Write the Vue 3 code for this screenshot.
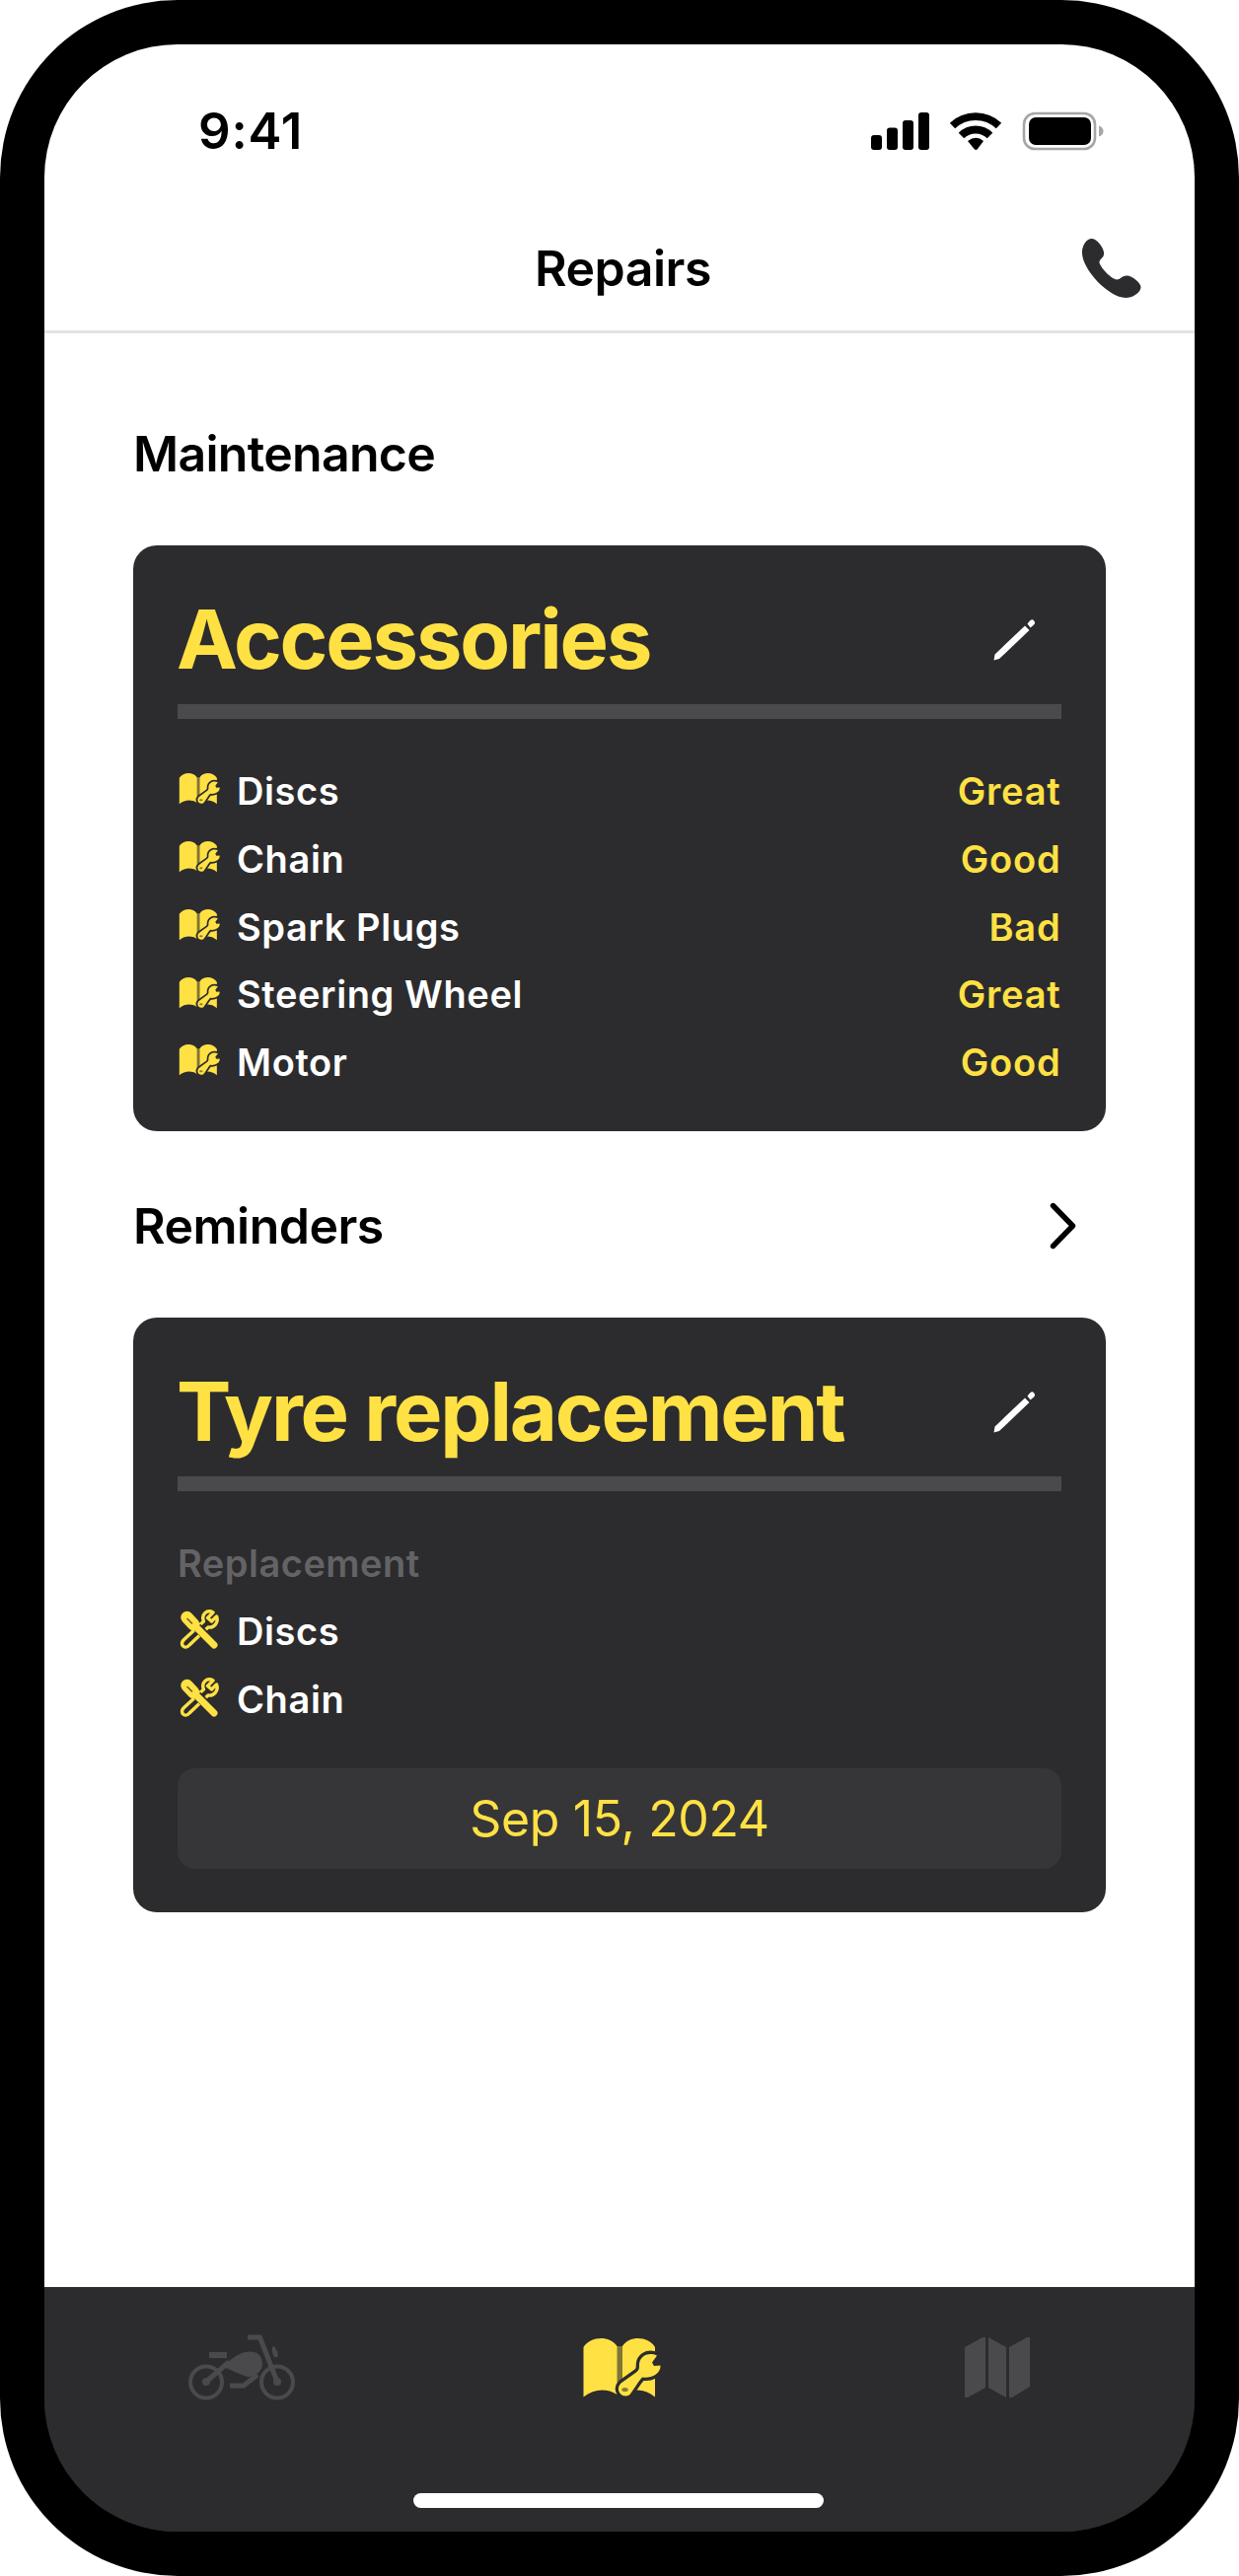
<script setup>
const accessories = [
  { name: 'Discs', state: 'Great' },
  { name: 'Chain', state: 'Good' },
  { name: 'Spark Plugs', state: 'Bad' },
  { name: 'Steering Wheel', state: 'Great' },
  { name: 'Motor', state: 'Good' },
]
const replacements = ['Discs', 'Chain']
</script>

<template>
  <div class="phone">
    <svg class="defs" width="0" height="0" aria-hidden="true">
      <symbol id="manual" viewBox="0 0 80 60">
        <path fill="#ffe144" opacity=".4" d="M34 8h8v48h-8z" />
        <path fill="#ffe144" d="M1.500 9C9-2.500 28-3 35.500 8V57C25 50.500 12 51 1.500 59.500ZM41 8C48-3 67-2.500 74 9V59.500C64 51 52 50.500 41 57Z" />
        <path fill="#ffe144" stroke="#2c2c2e" stroke-width="6.500" stroke-linejoin="round" paint-order="stroke" d="M76 17.500C66 13 57 19 58 29C58 31 57 33 55 34.500L39.500 45.500C33 52 40 61.500 48 57.500C52 53 56 45 61 39.500C69 41 80 37 79.500 27.500L73 28L71 24.500Z" />
        <ellipse cx="43.500" cy="52" rx="3.300" ry="2" fill="#8a7a36" />
      </symbol>
      <symbol id="tools" viewBox="0 0 40 40">
        <g fill="none" stroke="#ffe144" stroke-linecap="round">
          <path stroke-width="3.400" d="M34 3C28-.5 21.500 5 24.500 12L4 31C-.5 36 6 41 10 36L29 18C35 19 40 13 37.500 7L32.500 12L28.500 8.500Z" stroke-linejoin="round" />
          <path stroke="#2c2c2e" stroke-width="9" d="M18 18L36 36" stroke-linecap="butt" />
          <path stroke-width="12.500" d="M7.500 8L14 15" />
          <path stroke-width="7" d="M16 17L35 36" />
          <path stroke="#2c2c2e" stroke-width="1.600" d="M8 9.500L12.500 14" opacity=".75" />
        </g>
      </symbol>
      <symbol id="pencil" viewBox="0 0 43 42">
        <path fill="#fff" d="M1.500 35.500L32 6.500L36.500 11L6 40L.5 41.500ZM34.500 4.500L37 1.500Q40-1 41.500 2Q43 4 40.500 6L37.500 8.500Z" />
      </symbol>
    </svg>

    <div class="screen">
      <div class="status">
        <span class="time">9:41</span>
        <svg class="signals" width="240" height="44" viewBox="880 111 240 44">
          <rect x="883" y="137" width="11" height="15" rx="3" />
          <rect x="899" y="129.500" width="11" height="22.500" rx="3" />
          <rect x="915" y="122" width="11" height="30" rx="3" />
          <rect x="931" y="114" width="11" height="38" rx="3" />
          <g fill="none" stroke="#000" stroke-width="7.800">
            <path d="M965.500 127.500A34 34 0 0 1 1012.500 127.500" />
            <path d="M974.500 137.500A20.500 20.500 0 0 1 1003.500 137.500" />
          </g>
          <path d="M981 143Q989.500 136.500 997 143L991 151Q989.500 153 987.500 151Z" />
          <rect x="1038" y="115" width="72" height="36" rx="11" fill="none" stroke="#a6a6a6" stroke-width="2.600" />
          <rect x="1043" y="119" width="63" height="28" rx="7" />
          <path fill="#a6a6a6" d="M1114 127.500Q1118.500 129 1118.500 133T1114 138.500Z" />
        </svg>
      </div>

      <header class="nav">
        <h1>Repairs</h1>
        <svg class="call" width="61" height="60" viewBox="0 0 61 60">
          <path fill="#2c2c2e" d="M1 12C2 5 6 0 10.500 0C16 0 24 10 23 16C22.500 20 18 21 18.500 24.500C20 30 31 41 36 41.500C40 41.500 41 37.500 46 37.500C51 37 61 45 60.500 49.500C60 55 52 60 45 60C28 60-1 30 1 12Z" />
        </svg>
      </header>

      <main>
        <h2>Maintenance</h2>
        <section class="card">
          <div class="card-head">
            <h3>Accessories</h3>
            <svg class="edit"><use href="#pencil" /></svg>
          </div>
          <ul>
            <li v-for="a in accessories" :key="a.name">
              <svg class="book"><use href="#manual" /></svg>
              <span class="name">{{ a.name }}</span>
              <span class="state">{{ a.state }}</span>
            </li>
          </ul>
        </section>

        <h2 class="second">
          Reminders
          <svg class="chevron" width="28" height="48" viewBox="0 0 28 48">
            <path d="M3.500 3.500L23.500 24L3.500 44.500" fill="none" stroke="#000" stroke-width="5.400" stroke-linecap="round" stroke-linejoin="round" />
          </svg>
        </h2>
        <section class="card">
          <div class="card-head">
            <h3>Tyre replacement</h3>
            <svg class="edit"><use href="#pencil" /></svg>
          </div>
          <ul>
            <li class="label">Replacement</li>
            <li v-for="r in replacements" :key="r">
              <svg class="tool"><use href="#tools" /></svg>
              <span class="name">{{ r }}</span>
            </li>
          </ul>
          <div class="date">Sep 15, 2024</div>
        </section>
      </main>

      <footer>
        <nav class="tabs">
          <svg width="108" height="67" viewBox="0 0 108 67">
            <g fill="none" stroke="#4a4a4c" stroke-width="4">
              <circle cx="18" cy="48.500" r="16" />
              <circle cx="90" cy="48.500" r="16" />
              <path stroke-width="5" d="M18 48L41 28M60 3H72.500L90 48M70 41L56 52H42" />
              <path stroke-width="6" d="M21 21H39" />
            </g>
            <g fill="#4a4a4c">
              <circle cx="18" cy="48" r="4" /><circle cx="90" cy="48" r="4" />
              <path d="M37 30C49 21 54 17.500 63 17.500C71 17.500 75 23 75 30C75 37 68 43 60 43C50 40 44 36 37 34ZM85 13Q84 18 87 23H90.500V18L87 12Z" />
            </g>
          </svg>
          <svg class="tab-book" width="80" height="60"><use href="#manual" /></svg>
          <svg width="66" height="61" viewBox="0 0 66 61" fill="#4a4a4c">
            <path d="M0 10L18 0H21V51L3 61H0ZM24 0L42 10V61L24 51ZM45 10L63 0H66V50L48 61H45Z" />
          </svg>
        </nav>
        <div class="home"></div>
      </footer>
    </div>
  </div>
</template>

<style>
body { margin: 0; background: #fff; }
</style>

<style scoped>
* { box-sizing: border-box; }
.phone {
  width: 1256px;
  height: 2612px;
  padding: 45px;
  background: #000;
  border-radius: 180px;
  font-family: Inter, "Liberation Sans", sans-serif;
}
.defs { position: absolute; }
svg { display: block; flex: none; }
.screen {
  height: 2522px;
  display: flex;
  flex-direction: column;
  overflow: hidden;
  background: linear-gradient(#fff 2274px, #2c2c2e 2274px);
  border-radius: 135px;
}
.status {
  height: 175px;
  padding: 0 91px 0 156px;
  display: flex;
  align-items: center;
  justify-content: space-between;
}
.time { font-size: 51px; font-weight: 600; letter-spacing: 0.8px; }
.nav {
  height: 118px;
  padding: 0 54px;
  display: grid;
  grid-template-columns: 61px 1fr 61px;
  align-items: start;
  border-bottom: 3px solid #e3e3e3;
}
h1, h2, h3, ul { margin: 0; padding: 0; }
h1 {
  grid-column: 2;
  margin-top: 22px;
  padding-left: 7px;
  line-height: 60px;
  font-size: 50px;
  font-weight: 570;
  letter-spacing: -0.5px;
  text-align: center;
}
.call { margin-top: 22px; }
main { flex: 1; padding: 0 90px; }
h2 {
  height: 60px;
  margin: 92px 0 63px;
  display: flex;
  align-items: center;
  justify-content: space-between;
  font-size: 50px;
  font-weight: 570;
  letter-spacing: -0.7px;
  line-height: 60px;
}
h2.second { margin: 66px 0 63px; padding-right: 29px; letter-spacing: -0.5px; }
.card {
  padding: 30px 45px 35.500px;
  background: #2c2c2e;
  border-radius: 24px;
}
.card:last-child { padding-bottom: 44px; }
.card-head {
  height: 146px;
  padding-right: 26px;
  display: flex;
  align-items: center;
  justify-content: space-between;
  border-bottom: 15px solid #4a4a4c;
}
h3 { color: #ffe144; font-size: 83px; font-weight: 690; letter-spacing: -2.150px; line-height: 131px; margin-left: -1px; }
.edit { width: 43px; height: 42px; }
ul { margin-top: 38.600px; list-style: none; }
li {
  height: 68.800px;
  display: flex;
  align-items: center;
  color: #fff;
  font-size: 38px;
  font-weight: 560;
  letter-spacing: 0.6px;
  line-height: 68px;
}
.label { color: #636366; font-weight: 600; letter-spacing: 0.5px; }
.book { width: 42px; height: 31.500px; margin: -4px 17px 0 1px; }
.tool { width: 40px; height: 40px; margin: -4px 18px 0 2px; }
.state { margin-left: auto; padding-right: 0.5px; color: #ffe144; font-weight: 590; letter-spacing: 0.8px; }
.date {
  height: 102px;
  margin-top: 36px;
  border-radius: 18px;
  background: #363638;
  color: #ffe144;
  font-size: 50px;
  letter-spacing: -0.35px;
  line-height: 102px;
  text-align: center;
}
footer {
  height: 248px;
  display: flex;
  flex-direction: column;
  align-items: center;
  justify-content: space-between;
  padding-bottom: 24px;
  background: #2c2c2e;
}
.tabs {
  width: 100%;
  padding: 48px 167px 0 146px;
  display: flex;
  justify-content: space-between;
  align-items: center;
}
.tab-book { margin-right: 18px; }
.home { width: 416px; height: 15px; margin-right: 3px; border-radius: 8px; background: #fff; }
</style>
